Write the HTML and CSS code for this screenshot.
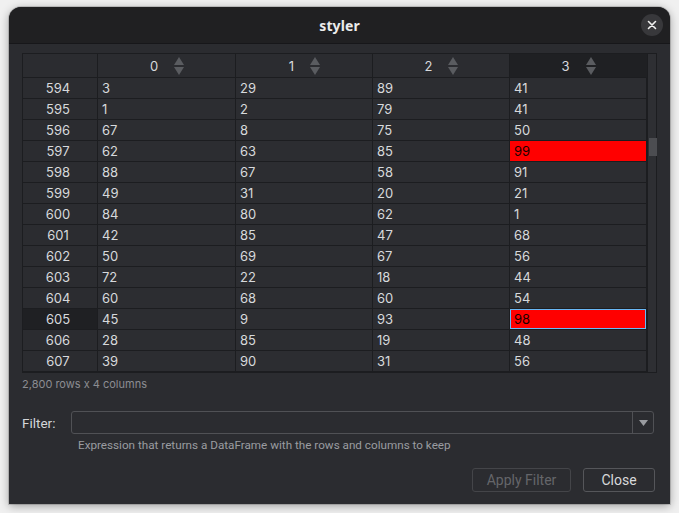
FILE: index.html
```html
<!DOCTYPE html>
<html>
<head>
<meta charset="utf-8">
<link rel="stylesheet" href="styles.css">
</head>
<body>
<div class="window">
  <div class="titlebar">
    <span class="title">styler</span>
    <button class="close-x" aria-label="close">
      <svg width="10" height="10" viewBox="0 0 10 10"><path d="M1.5 1.5 L8.5 8.5 M8.5 1.5 L1.5 8.5" stroke="#f0f0f0" stroke-width="1.6" stroke-linecap="round"/></svg>
    </button>
  </div>
  <div class="content">
    <div class="frame">
      <div class="grid">
        <div class="hcell corner"></div>
        <div class="hcell"><span>0</span><i class="sort"><b class="up"></b><b class="dn"></b></i></div>
        <div class="hcell"><span>1</span><i class="sort"><b class="up"></b><b class="dn"></b></i></div>
        <div class="hcell"><span>2</span><i class="sort"><b class="up"></b><b class="dn"></b></i></div>
        <div class="hcell sel"><span>3</span><i class="sort"><b class="up"></b><b class="dn"></b></i></div>

        <div class="rh">594</div><div class="c">3</div><div class="c">29</div><div class="c">89</div><div class="c">41</div>
        <div class="rh">595</div><div class="c">1</div><div class="c">2</div><div class="c">79</div><div class="c">41</div>
        <div class="rh">596</div><div class="c">67</div><div class="c">8</div><div class="c">75</div><div class="c">50</div>
        <div class="rh">597</div><div class="c">62</div><div class="c">63</div><div class="c">85</div><div class="c red">99</div>
        <div class="rh">598</div><div class="c">88</div><div class="c">67</div><div class="c">58</div><div class="c">91</div>
        <div class="rh">599</div><div class="c">49</div><div class="c">31</div><div class="c">20</div><div class="c">21</div>
        <div class="rh">600</div><div class="c">84</div><div class="c">80</div><div class="c">62</div><div class="c">1</div>
        <div class="rh">601</div><div class="c">42</div><div class="c">85</div><div class="c">47</div><div class="c">68</div>
        <div class="rh">602</div><div class="c">50</div><div class="c">69</div><div class="c">67</div><div class="c">56</div>
        <div class="rh">603</div><div class="c">72</div><div class="c">22</div><div class="c">18</div><div class="c">44</div>
        <div class="rh">604</div><div class="c">60</div><div class="c">68</div><div class="c">60</div><div class="c">54</div>
        <div class="rh sel">605</div><div class="c">45</div><div class="c">9</div><div class="c">93</div><div class="c red focus">98</div>
        <div class="rh">606</div><div class="c">28</div><div class="c">85</div><div class="c">19</div><div class="c">48</div>
        <div class="rh">607</div><div class="c">39</div><div class="c">90</div><div class="c">31</div><div class="c">56</div>
      </div>
      <div class="vscroll"><div class="thumb"></div></div>
    </div>
    <div class="status">2,800 rows x 4 columns</div>

    <div class="filter-row">
      <label class="flabel">Filter:</label>
      <div class="combo">
        <div class="combo-input"></div>
        <div class="combo-btn"><svg width="9" height="6" viewBox="0 0 9 6"><path d="M0 0 H9 L4.5 6 Z" fill="#9a9ca0"/></svg></div>
      </div>
    </div>
    <div class="hint">Expression that returns a DataFrame with the rows and columns to keep</div>

    <div class="buttons">
      <button class="btn disabled">Apply Filter</button>
      <button class="btn">Close</button>
    </div>
  </div>
</div>
</body>
</html>
```

FILE: styles.css
```css
* { box-sizing: border-box; }
html, body { margin: 0; padding: 0; }
body {
  background: #f0f0f0;
  width: 679px;
  height: 513px;
  overflow: hidden;
  padding: 7px 9px 0 9px;
  font-family: "Inter", "Noto Sans", sans-serif;
}
.window {
  width: 661px;
  height: 497px;
  background: #2b2c30;
  border-radius: 12px 12px 0 0;
  box-shadow: 0 2px 10px rgba(0,0,0,0.35), 0 0 0 1px rgba(0,0,0,0.15);
  display: flex;
  flex-direction: column;
  overflow: hidden;
}
.titlebar {
  height: 37px;
  flex: none;
  background: #202022;
  border-bottom: 1px solid #17171a;
  display: flex;
  align-items: center;
  justify-content: center;
  position: relative;
}
.title {
  color: #ececec;
  font-family: "Noto Sans", "Open Sans", sans-serif;
  font-weight: 700;
  font-size: 14px;
  letter-spacing: 0.1px;
}
.close-x {
  position: absolute;
  right: 7px;
  top: 7px;
  width: 22px;
  height: 22px;
  border-radius: 50%;
  background: #38383b;
  border: none;
  padding: 0;
  display: flex;
  align-items: center;
  justify-content: center;
}
.content {
  padding: 9px 12px 0 13px;
  display: flex;
  flex-direction: column;
}
.frame {
  display: flex;
  width: 635px;
  border: 1px solid #1c1d20;
  background: #2b2c30;
}
.grid {
  display: grid;
  grid-template-columns: 75px 138px 137px 137px 137px;
  grid-template-rows: 24px repeat(14, 21px);
}
.hcell {
  display: flex;
  align-items: center;
  justify-content: center;
  gap: 16px;
  color: #d7d9dc;
  font-size: 13px;
  border-right: 1px solid #1c1d20;
  border-bottom: 1px solid #1c1d20;
  background: #2b2c30;
  padding-left: 1px;
}
.hcell.corner { gap: 0; }
.hcell.sel { background: #1f2023; border-right: 1px solid #1f2023; }
.sort {
  display: flex;
  flex-direction: column;
  gap: 2px;
}
.sort b {
  display: block;
  width: 0;
  height: 0;
  border-left: 5.5px solid transparent;
  border-right: 5.5px solid transparent;
}
.sort .up { border-bottom: 8px solid #5a5c60; }
.sort .dn { border-top: 8px solid #5a5c60; }
.rh {
  display: flex;
  align-items: center;
  justify-content: center;
  color: #d7d9dc;
  font-size: 13px;
  border-right: 1px solid #1c1d20;
  border-bottom: 1px solid #1c1d20;
  padding-right: 4px;
}
.rh.sel { background: #1f2023; }
.c {
  display: flex;
  align-items: center;
  padding-left: 4px;
  color: #d7d9dc;
  font-size: 13px;
  border-right: 1px solid #1c1d20;
  border-bottom: 1px solid #1c1d20;
  background: #2c2d31;
}
.c.red { background: #ff0000; color: #1a0000; }
.c.focus { box-shadow: inset 0 0 0 1px #6ab8f5; }
.vscroll {
  width: 11px;
  border-left: 1px solid #1c1d20;
  background: #2e2f33;
  position: relative;
}
.thumb {
  position: absolute;
  left: 1px;
  top: 84px;
  width: 8px;
  height: 18px;
  background: #4c4d51;
}
.status {
  margin-top: 4px;
  font-size: 11px;
  color: #8b8d92;
  height: 15px;
  line-height: 15px;
}
.filter-row {
  margin-top: 19px;
  display: flex;
  align-items: center;
}
.flabel {
  width: 49px;
  color: #d4d6d9;
  font-family: "Roboto", sans-serif;
  font-size: 13.5px;
}
.combo {
  width: 583px;
  height: 23px;
  border: 1px solid #505155;
  border-radius: 3px;
  display: flex;
  background: #2b2c30;
}
.combo-input { flex: 1; }
.combo-btn {
  width: 21px;
  border-left: 1px solid #505155;
  display: flex;
  align-items: center;
  justify-content: center;
}
.hint {
  margin-top: 4px;
  margin-left: 56px;
  font-family: "Roboto", sans-serif;
  font-size: 11.7px;
  color: #9a9ca0;
  height: 15px;
  line-height: 15px;
}
.buttons {
  margin-top: 15px;
  display: flex;
  justify-content: flex-end;
  gap: 12px;
  padding-right: 3px;
}
.btn {
  height: 24px;
  background: #2b2c30;
  border: 1px solid #55565a;
  border-radius: 3px;
  color: #d8d9db;
  font-family: "Roboto", sans-serif;
  font-size: 14px;
  font-weight: 400;
  padding: 0;
}
.btn.disabled { width: 99px; color: #65666a; border-color: #444549; }
.btn:last-child { width: 72px; }
```
